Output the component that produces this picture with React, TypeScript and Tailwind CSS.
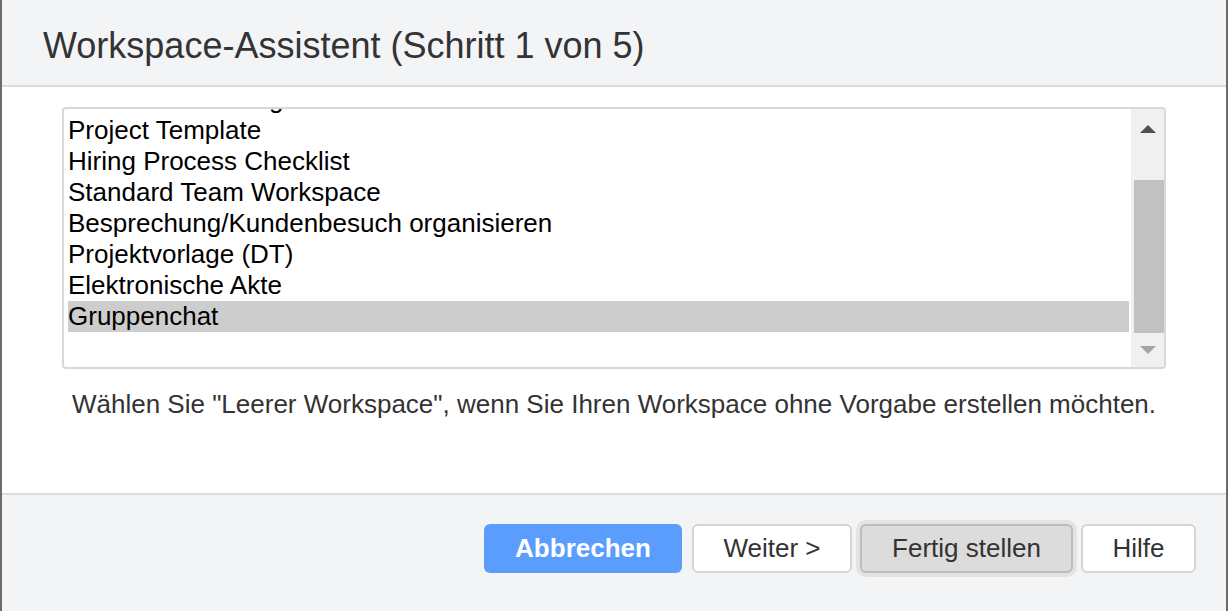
const templates = [
  "Kundenverwaltung",
  "Project Template",
  "Hiring Process Checklist",
  "Standard Team Workspace",
  "Besprechung/Kundenbesuch organisieren",
  "Projektvorlage (DT)",
  "Elektronische Akte",
  "Gruppenchat",
];

const selected = "Gruppenchat";

export default function App() {
  return (
    <div
      className="w-[1228px] h-[611px] flex flex-col border-x-2 border-[#6b6b6b] overflow-hidden text-[#333]"
      style={{ fontFamily: '"Liberation Sans", Arial, sans-serif' }}
    >
      <div className="h-[87px] shrink-0 bg-[#f3f4f6] border-b-2 border-[#dcdcdc] flex items-center pl-[41px] pt-[7px]">
        <h1 className="text-[36px] leading-none">Workspace-Assistent (Schritt 1 von 5)</h1>
      </div>

      <div className="h-[406px] shrink-0 bg-white px-[60px] pt-[20px]">
        <div className="h-[262px] border-2 border-[#d6d8da] rounded-[4px] flex overflow-hidden">
          <div className="flex-1 overflow-hidden pl-[4px] pr-[2px]">
            <div className="mt-[-25px]">
              {templates.map((t) => (
                <div
                  key={t}
                  className={`h-[31px] text-[26px] leading-[31px] text-black whitespace-nowrap ${
                    t === selected ? "bg-[#cdcdcd]" : ""
                  }`}
                >
                  {t}
                </div>
              ))}
            </div>
          </div>
          <div className="w-[33px] bg-[#f0f0f0] flex flex-col items-center">
            <div className="h-[40px] flex items-center justify-center">
              <svg width="18" height="10" viewBox="0 0 18 10">
                <path d="M9 1 L17 9 L1 9 Z" fill="#505050" />
              </svg>
            </div>
            <div className="h-[31px]" />
            <div className="w-[30px] h-[153px] bg-[#c1c1c1] ml-[3px]" />
            <div className="flex-1 flex items-center justify-center">
              <svg width="18" height="10" viewBox="0 0 18 10">
                <path d="M1 1 L17 1 L9 9 Z" fill="#a3a3a3" />
              </svg>
            </div>
          </div>
        </div>
        <p className="mt-[22px] text-center text-[26px] leading-none">
          Wählen Sie "Leerer Workspace", wenn Sie Ihren Workspace ohne Vorgabe erstellen möchten.
        </p>
      </div>

      <div className="flex-1 bg-[#f3f4f6] border-t-2 border-[#dcdcdc] flex justify-end items-start pt-[29px] pr-[30px] gap-[8px]">
        <button className="w-[198px] h-[49px] rounded-[6px] bg-[#5b9dfd] text-white font-bold text-[26px] mr-[2px]">
          Abbrechen
        </button>
        <button className="w-[160px] h-[49px] rounded-[6px] bg-white border-2 border-[#d5d5d5] text-[26px]">
          Weiter &gt;
        </button>
        <button className="w-[213px] h-[49px] rounded-[6px] bg-[#dcdcdc] border-2 border-[#bcbcbc] ring-4 ring-[#e3e3e3] text-[26px]">
          Fertig stellen
        </button>
        <button className="w-[115px] h-[49px] rounded-[6px] bg-white border-2 border-[#d5d5d5] text-[26px]">
          Hilfe
        </button>
      </div>
    </div>
  );
}
